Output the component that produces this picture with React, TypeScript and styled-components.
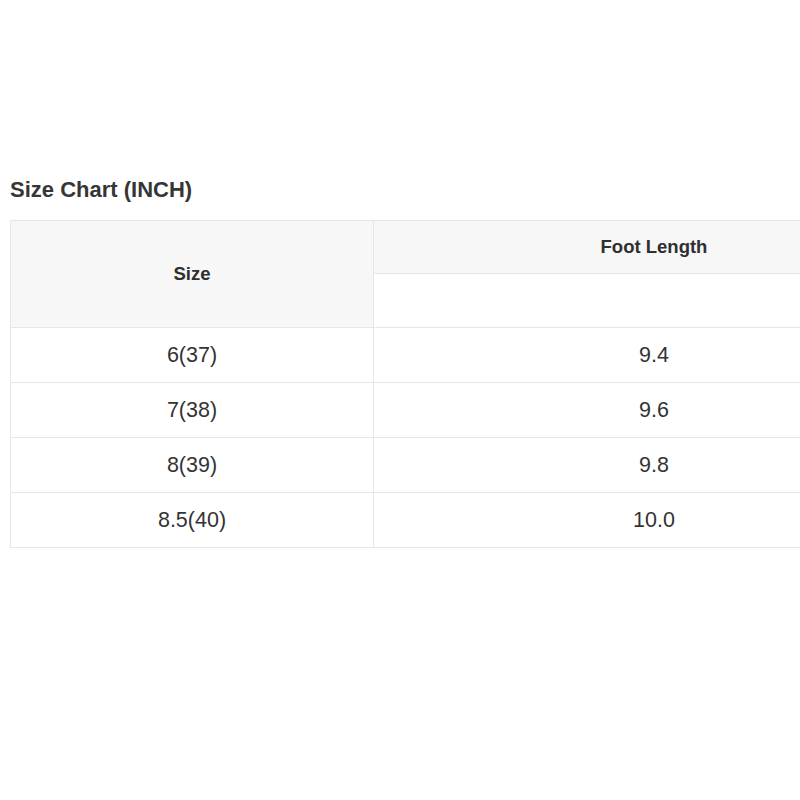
import React from "react";
import styled, { createGlobalStyle } from "styled-components";

const Global = createGlobalStyle`
  html, body { margin: 0; padding: 0; background: #ffffff; }
  body { font-family: "Liberation Sans", Arial, Helvetica, sans-serif; color: #333333; }
`;

const Page = styled.div`
  width: 800px;
  height: 800px;
  overflow: hidden;
  padding: 175px 0 0 10px;
  box-sizing: border-box;
`;

const Title = styled.h2`
  margin: 0 0 16px 0;
  font-size: 22px;
  line-height: 29px;
  font-weight: 700;
  color: #363636;
`;

const Table = styled.table`
  border-collapse: collapse;
  width: 924px;
  table-layout: fixed;
`;

const Cell = styled.td<{ $head?: boolean; $shade?: boolean; $h: number }>`
  border: 1px solid #e6e6e6;
  height: ${(p) => p.$h}px;
  padding: 0;
  box-sizing: border-box;
  text-align: center;
  vertical-align: middle;
  background: ${(p) => (p.$shade ? "#f7f7f7" : "#ffffff")};
  font-size: ${(p) => (p.$head ? "18.5px" : "21.5px")};
  font-weight: ${(p) => (p.$head ? 700 : 400)};
  color: ${(p) => (p.$head ? "#2f2f2f" : "#333333")};
`;

const rows: [string, string][] = [
  ["6(37)", "9.4"],
  ["7(38)", "9.6"],
  ["8(39)", "9.8"],
  ["8.5(40)", "10.0"],
];

export default function App() {
  return (
    <>
      <Global />
      <Page>
        <Title>Size Chart (INCH)</Title>
        <Table>
          <colgroup>
            <col style={{ width: 363 }} />
            <col style={{ width: 561 }} />
          </colgroup>
          <tbody>
            <tr>
              <Cell as="th" rowSpan={2} $head $shade $h={53}>
                Size
              </Cell>
              <Cell as="th" $head $shade $h={53}>
                Foot Length
              </Cell>
            </tr>
            <tr>
              <Cell $h={54}></Cell>
            </tr>
            {rows.map(([s, f]) => (
              <tr key={s}>
                <Cell $h={55}>{s}</Cell>
                <Cell $h={55}>{f}</Cell>
              </tr>
            ))}
          </tbody>
        </Table>
      </Page>
    </>
  );
}
